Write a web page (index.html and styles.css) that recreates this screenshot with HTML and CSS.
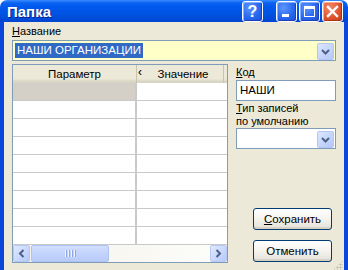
FILE: index.html
```html
<!DOCTYPE html>
<html lang="ru">

<head>
    <meta charset="UTF-8">
    <title>Папка</title>
    <link rel="stylesheet" href="styles.css">
</head>

<body>
    <div class="window">
        <div class="titlebar">
            <span class="title">Папка</span>
            <div class="caption-buttons">
                <span class="cap-btn help">?</span>
                <span class="cap-btn min"><i></i></span>
                <span class="cap-btn max"><i></i></span>
                <span class="cap-btn close">
                    <svg width="13" height="13" viewBox="0 0 13 13">
                        <path d="M2 2 L11 11 M11 2 L2 11" stroke="#fff" stroke-width="2.4" stroke-linecap="square" />
                    </svg>
                </span>
            </div>
        </div>

        <div class="client">
            <label class="label"><u>Н</u>азвание</label>
            <div class="combo combo-name">
                <span class="combo-text"><span class="selected">НАШИ ОРГАНИЗАЦИИ</span></span>
                <span class="drop-btn">
                    <svg width="9" height="6" viewBox="0 0 9 6">
                        <path d="M1 1 L4.5 4.5 L8 1" fill="none" stroke="#4d6185" stroke-width="2" />
                    </svg>
                </span>
            </div>

            <div class="main">
                <div class="grid">
                    <div class="grid-head">
                        <div class="head-cell col-param">Параметр</div>
                        <div class="head-cell col-value"><span class="sort">&lsaquo;</span>Значение</div>
                        <div class="head-rest"></div>
                    </div>
                    <div class="grid-body">
                        <div class="row"><div class="cell col-param current"></div><div class="cell col-value"></div></div>
                        <div class="row"><div class="cell col-param"></div><div class="cell col-value"></div></div>
                        <div class="row"><div class="cell col-param"></div><div class="cell col-value"></div></div>
                        <div class="row"><div class="cell col-param"></div><div class="cell col-value"></div></div>
                        <div class="row"><div class="cell col-param"></div><div class="cell col-value"></div></div>
                        <div class="row"><div class="cell col-param"></div><div class="cell col-value"></div></div>
                        <div class="row"><div class="cell col-param"></div><div class="cell col-value"></div></div>
                        <div class="row"><div class="cell col-param"></div><div class="cell col-value"></div></div>
                        <div class="row"><div class="cell col-param"></div><div class="cell col-value"></div></div>
                    </div>
                    <div class="hscroll">
                        <span class="sb-btn">
                            <svg width="7" height="9" viewBox="0 0 7 9">
                                <path d="M5.5 1 L2 4.5 L5.5 8" fill="none" stroke="#4d6185" stroke-width="2" />
                            </svg>
                        </span>
                        <span class="sb-thumb"><i></i><i></i><i></i><i></i></span>
                        <span class="sb-track"></span>
                        <span class="sb-btn">
                            <svg width="7" height="9" viewBox="0 0 7 9">
                                <path d="M1.5 1 L5 4.5 L1.5 8" fill="none" stroke="#4d6185" stroke-width="2" />
                            </svg>
                        </span>
                    </div>
                </div>

                <div class="side">
                    <label class="label"><u>К</u>од</label>
                    <div class="textbox">НАШИ</div>
                    <label class="label label-two"><u>Т</u>ип записей<br>по умолчанию</label>
                    <div class="combo combo-type">
                        <span class="combo-text"></span>
                        <span class="drop-btn">
                            <svg width="9" height="6" viewBox="0 0 9 6">
                                <path d="M1 1 L4.5 4.5 L8 1" fill="none" stroke="#4d6185" stroke-width="2" />
                            </svg>
                        </span>
                    </div>
                    <div class="buttons">
                        <button class="btn"><u>С</u>охранить</button>
                        <button class="btn">Отменить</button>
                    </div>
                </div>
            </div>

            <div class="grip"></div>
        </div>
    </div>
</body>

</html>
```

FILE: styles.css
```css
body {
    margin: 0;
    padding: 0;
    font-family: 'Liberation Sans', Arial, sans-serif;
    font-size: 11px;
    color: #000;
    background: #fff;
}

.window {
    width: 348px;
    height: 270px;
    display: flex;
    flex-direction: column;
}

/* title bar */

.titlebar {
    height: 29px;
    display: flex;
    align-items: center;
    justify-content: space-between;
    padding: 0 5px 0 7px;
    border-radius: 7px 7px 0 0;
    background: linear-gradient(#3a8cff 0, #0a62f2 3px, #0058ee 7px, #0054e3 60%, #0045d0 100%);
    box-sizing: border-box;
}

.title {
    color: #fff;
    font-weight: bold;
    font-size: 15px;
    text-shadow: 1px 1px 0 #0a1e8a;
    margin-top: 1px;
}

.caption-buttons {
    display: flex;
    gap: 2px;
    margin-top: 1px;
}

.cap-btn {
    width: 19px;
    height: 19px;
    border: 1px solid #fff;
    border-radius: 3px;
    display: flex;
    align-items: center;
    justify-content: center;
    position: relative;
    background: radial-gradient(circle at 35% 30%, #5d96ff 0, #2867f0 55%, #1b4fd8 100%);
    box-shadow: inset -1px -1px 0 #1c3fb8, inset 1px 1px 0 #86b0ff;
}

.cap-btn.help {
    margin-right: 11px;
    color: #fff;
    font-weight: bold;
    font-size: 16px;
}

.cap-btn.min i {
    position: absolute;
    left: 5px;
    top: 12px;
    width: 7px;
    height: 3px;
    background: #fff;
}

.cap-btn.max i {
    width: 9px;
    height: 7px;
    border: 1px solid #fff;
    border-top-width: 3px;
}

.cap-btn.close {
    background: radial-gradient(circle at 35% 30%, #f28b6c 0, #e0542e 55%, #c33d18 100%);
    box-shadow: inset -1px -1px 0 #a93414, inset 1px 1px 0 #f7ab92;
}

/* client area */

.client {
    flex: 1;
    position: relative;
    display: flex;
    flex-direction: column;
    background-color: #ece9d8;
    border: 4px solid #0b46da;
    border-top: 0;
    border-bottom-color: #0a3cc8;
    padding: 2px 8px 8px 8px;
}

.label {
    display: block;
    line-height: 14px;
    height: 14px;
}

.label-two {
    height: 26px;
    line-height: 13px;
    margin-top: 1px;
}

.combo {
    display: flex;
    height: 21px;
    border: 1px solid #7f9db9;
    box-sizing: border-box;
    background-color: #fff;
    padding: 1px;
}

.combo-name {
    margin-top: 2px;
    background-color: #ffffc8;
}

.combo-text {
    flex: 1;
    display: flex;
    align-items: center;
    padding-left: 1px;
}

.selected {
    background-color: #316ac5;
    color: #fff;
    padding: 1px 2px 1px 2px;
    line-height: 13px;
    font-size: 11.5px;
}

.drop-btn {
    width: 15px;
    height: 15px;
    margin: 1px 0 0 0;
    border: 1px solid #b4c6f3;
    border-radius: 2px;
    display: flex;
    align-items: center;
    justify-content: center;
    background: linear-gradient(135deg, #dde7fe 0, #c2d3fc 60%, #b3c8fa 100%);
}

/* main part */

.main {
    flex: 1;
    display: flex;
    gap: 8px;
    margin-top: 3px;
}

.grid {
    width: 216px;
    display: flex;
    flex-direction: column;
    border: 1px solid #7f9db9;
    box-sizing: border-box;
    background-color: #fff;
}

.grid-head {
    display: flex;
    height: 18px;
    background: linear-gradient(#ece9d8 0, #ece9d8 14px, #e2decd 15px, #d8d4c4 17px);
}

.head-cell {
    display: flex;
    align-items: center;
    justify-content: center;
    box-sizing: border-box;
    line-height: 16px;
    font-size: 11.5px;
}

.head-cell.col-param {
    width: 124px;
    border-right: 1px solid #c7c5b2;
}

.head-cell.col-value {
    width: 87px;
    position: relative;
    padding-left: 6px;
    border-right: 1px solid #c7c5b2;
}

.sort {
    position: absolute;
    left: 1px;
    top: -1px;
    font-size: 12px;
}

.head-rest {
    flex: 1;
}

.grid-body {
    flex: 1;
    overflow: hidden;
}

.row {
    display: flex;
    height: 18px;
    border-bottom: 1px solid #c9c9c9;
    box-sizing: border-box;
}

.cell {
    box-sizing: border-box;
}

.cell.col-param {
    width: 124px;
    border-right: 2px solid #c9c9c9;
}

.cell.col-value {
    width: 88px;
}

.cell.current {
    background-color: #d4d0c8;
}

/* scrollbar */

.hscroll {
    display: flex;
    height: 17px;
    background: linear-gradient(90deg, #f3f1ea, #fdfdfa);
}

.sb-btn {
    width: 15px;
    height: 15px;
    border: 1px solid #b7c9f3;
    border-radius: 2px;
    display: flex;
    align-items: center;
    justify-content: center;
    background: linear-gradient(135deg, #e0e9fe 0, #c6d6fc 60%, #b5c9fa 100%);
}

.sb-thumb {
    width: 76px;
    height: 15px;
    margin-left: 1px;
    border: 1px solid #aec3f1;
    border-radius: 2px;
    display: flex;
    align-items: center;
    justify-content: center;
    gap: 1px;
    background: linear-gradient(#d2defd, #c2d3fc 50%, #b9cbf8);
}

.sb-thumb i {
    width: 1px;
    height: 7px;
    background-color: #eef3ff;
    box-shadow: 1px 0 0 #8ca6e6;
    margin-right: 1px;
}

.sb-track {
    flex: 1;
}

/* right side */

.side {
    width: 100px;
    display: flex;
    flex-direction: column;
    padding-top: 1px;
}

.textbox {
    height: 21px;
    margin-top: 1px;
    border: 1px solid #7f9db9;
    box-sizing: border-box;
    background-color: #fff;
    padding-left: 3px;
    line-height: 19px;
    font-size: 11.5px;
}

.buttons {
    margin-top: auto;
    display: flex;
    flex-direction: column;
    align-items: flex-end;
    gap: 10px;
    padding-right: 4px;
    margin-bottom: 1px;
}

.btn {
    width: 79px;
    height: 22px;
    padding: 0;
    font-family: 'Liberation Sans', Arial, sans-serif;
    font-size: 11.5px;
    color: #000;
    border: 1px solid #003c74;
    border-radius: 3px;
    background: linear-gradient(#ffffff 0, #f4f3ee 50%, #e3e1d7 100%);
    box-shadow: inset 0 -2px 0 #d6d0c5;
    cursor: pointer;
}

.grip {
    position: absolute;
    right: 1px;
    bottom: 1px;
    width: 10px;
    height: 10px;
    background-image: radial-gradient(circle, #b9b4a4 0.9px, transparent 1.1px);
    background-size: 3px 3px;
    clip-path: polygon(100% 0, 100% 100%, 0 100%);
}
```
